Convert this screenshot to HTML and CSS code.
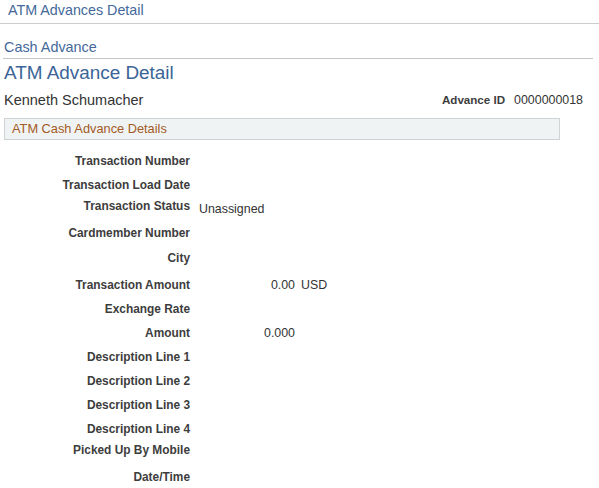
FILE: index.html
```html
<!DOCTYPE html>
<html>
<head>
<meta charset="utf-8">
<link rel="stylesheet" href="styles.css">
</head>
<body>
<div class="page-title">ATM Advances Detail</div>
<div class="breadcrumb">Cash Advance</div>
<h1 class="heading">ATM Advance Detail</h1>
<div class="person-row">
  <span class="person">Kenneth Schumacher</span>
  <span class="adv-id"><span class="adv-label">Advance ID</span><span class="adv-value">0000000018</span></span>
</div>
<div class="section-box">ATM Cash Advance Details</div>
<div class="fields">
  <div class="row"><span class="label">Transaction Number</span><span class="value"></span></div>
  <div class="row"><span class="label">Transaction Load Date</span><span class="value"></span></div>
  <div class="row"><span class="label label-top">Transaction Status</span><span class="value">Unassigned</span></div>
  <div class="row"><span class="label">Cardmember Number</span><span class="value"></span></div>
  <div class="row row-gap1"><span class="label">City</span><span class="value"></span></div>
  <div class="row row-gap3"><span class="label">Transaction Amount</span><span class="value"><span class="num">0.00</span><span class="cur">USD</span></span></div>
  <div class="row"><span class="label">Exchange Rate</span><span class="value"></span></div>
  <div class="row"><span class="label">Amount</span><span class="value"><span class="num">0.000</span></span></div>
  <div class="row"><span class="label">Description Line 1</span><span class="value"></span></div>
  <div class="row"><span class="label">Description Line 2</span><span class="value"></span></div>
  <div class="row"><span class="label">Description Line 3</span><span class="value"></span></div>
  <div class="row"><span class="label">Description Line 4</span><span class="value"></span></div>
  <div class="row"><span class="label label-top">Picked Up By Mobile</span><span class="value"></span></div>
  <div class="row"><span class="label">Date/Time</span><span class="value"></span></div>
</div>
</body>
</html>
```
FILE: styles.css
```css
html, body {
  margin: 0;
  padding: 0;
  background: #ffffff;
}
body {
  font-family: "Liberation Sans", Arial, sans-serif;
  color: #333333;
  width: 599px;
}
.page-title {
  font-size: 14.3px;
  line-height: 21px;
  padding: 0 0 2px 8px;
  color: #44699a;
  border-bottom: 1px solid #cccccc;
}
.breadcrumb {
  font-size: 14.4px;
  line-height: 22px;
  margin: 12px 6px 0 3px;
  padding-left: 1px;
  color: #44699a;
  border-bottom: 1px solid #c4c4c4;
}
.heading {
  margin: 0;
  font-weight: normal;
  font-size: 18.9px;
  line-height: 28px;
  padding-left: 4px;
  color: #3b6597;
}
.person-row {
  display: flex;
  justify-content: space-between;
  align-items: center;
  height: 25px;
  padding: 0 16px 0 4px;
}
.person {
  font-size: 14.5px;
  color: #333333;
}
.adv-id {
  display: flex;
  gap: 9px;
  font-size: 11.6px;
}
.adv-label {
  font-weight: bold;
  color: #3d3d3d;
}
.adv-value {
  font-size: 12.4px;
  color: #333333;
}
.section-box {
  margin: 6px 0 0 4px;
  height: 20px;
  line-height: 20px;
  border: 1px solid #cfd3d6;
  background: #f0f3f4;
  color: #a35a25;
  font-size: 12.8px;
  padding-left: 7px;
  box-sizing: content-box;
  width: 547px;
}
.fields {
  margin-top: 9px;
  display: flex;
  flex-direction: column;
}
.row {
  display: flex;
  height: 24px;
  align-items: center;
  gap: 9px;
  padding-left: 4px;
}
.row-gap1 { margin-top: 1px; }
.row-gap3 { margin-top: 3px; }
.label {
  width: 186px;
  text-align: right;
  font-weight: bold;
  font-size: 11.9px;
  color: #3d3d3d;
  white-space: nowrap;
}
.label-top {
  padding-bottom: 6px;
}
.value {
  display: flex;
  font-size: 12.4px;
  color: #333333;
}
.num {
  width: 96px;
  text-align: right;
}
.cur {
  margin-left: 6px;
}
```
